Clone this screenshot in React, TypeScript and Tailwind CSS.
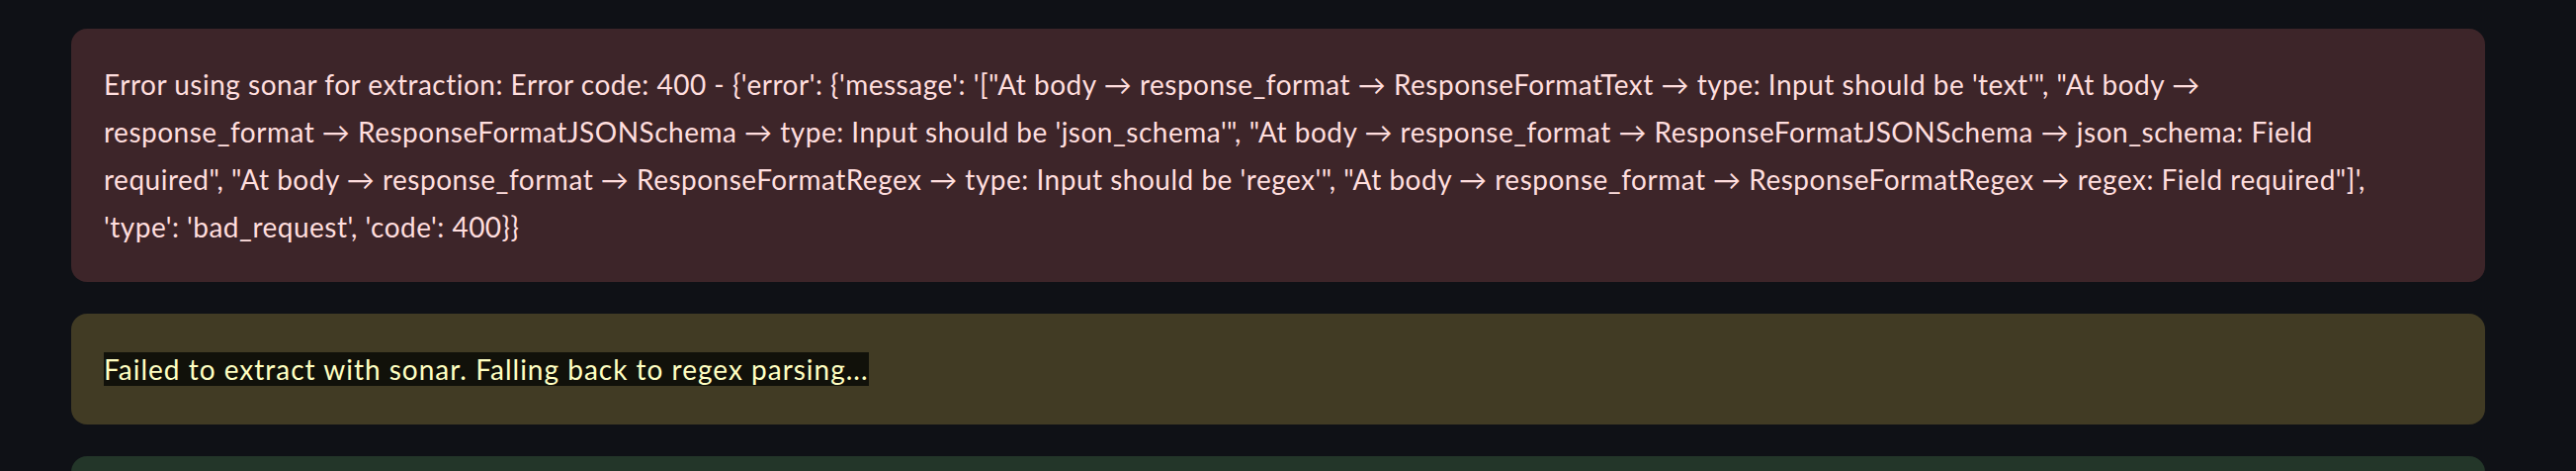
import React from 'react'

const font = { fontFamily: '"Lato", "Open Sans", sans-serif' }

function Alert({ tone, children }: { tone: 'error' | 'warning' | 'success'; children: React.ReactNode }) {
  const tones = {
    error: 'bg-[#3d2529] text-[#ffdede]',
    warning: 'bg-[#413b24] text-[#ffffc2]',
    success: 'bg-[#233629] text-[#dfffe9]',
  }
  return (
    <div className={`${tones[tone]} rounded-[16px] px-[33px] py-[32px] text-[28px] leading-[48px] tracking-[0.5px]`}>
      {children}
    </div>
  )
}

export default function App() {
  return (
    <div className="min-h-screen bg-[#0f1116] pl-[72px] pr-[92px] pt-[29px]" style={font}>
      <div className="flex flex-col gap-[32px]">
        <Alert tone="error">
          <p className="whitespace-nowrap">
            Error using sonar for extraction: Error code: 400 - {"{'error': {'message': '[\"At body → response_format → ResponseFormatText → type: Input should be 'text'\", \"At body →"}
            <br />
            {"response_format → ResponseFormatJSONSchema → type: Input should be 'json_schema'\", \"At body → response_format → ResponseFormatJSONSchema → json_schema: Field"}
            <br />
            {"required\", \"At body → response_format → ResponseFormatRegex → type: Input should be 'regex'\", \"At body → response_format → ResponseFormatRegex → regex: Field required\"]',"}
            <br />
            {"'type': 'bad_request', 'code': 400}}"}
          </p>
        </Alert>
        <Alert tone="warning">
          <p>
            <span className="bg-[#11110a] tracking-[1px]">Failed to extract with sonar. Falling back to regex parsing...</span>
          </p>
        </Alert>
        <Alert tone="success">
          <p className="h-[48px]"></p>
        </Alert>
      </div>
    </div>
  )
}
